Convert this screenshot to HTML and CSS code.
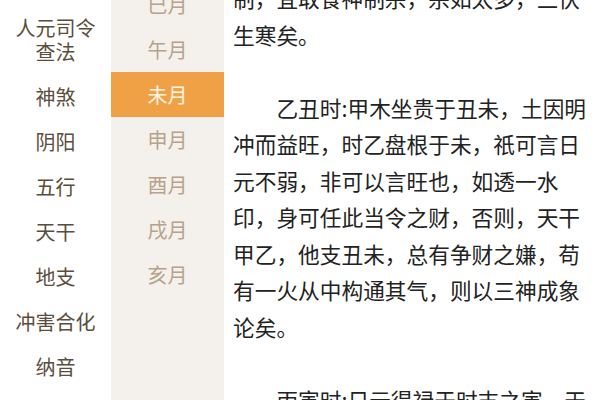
FILE: index.html
```html
<!DOCTYPE html>
<html lang="zh">
<head>
<meta charset="utf-8">
<link rel="stylesheet" href="styles.css">
</head>
<body>
<div class="page">
  <nav class="cats">
    <div class="cat">人元司令<br>查法</div>
    <div class="cat">神煞</div>
    <div class="cat">阴阳</div>
    <div class="cat">五行</div>
    <div class="cat">天干</div>
    <div class="cat">地支</div>
    <div class="cat">冲害合化</div>
    <div class="cat">纳音</div>
  </nav>
  <nav class="months">
    <div class="month">巳月</div>
    <div class="month">午月</div>
    <div class="month active">未月</div>
    <div class="month">申月</div>
    <div class="month">酉月</div>
    <div class="month">戌月</div>
    <div class="month">亥月</div>
  </nav>
  <article class="content">
    <p class="cont">制，宜取食神制杀，杀如太多，三伏生寒矣。</p>
    <p>乙丑时:甲木坐贵于丑未，土因明冲而益旺，时乙盘根于未，祇可言日元不弱，非可以言旺也，如透一水印，身可任此当令之财，否则，天干甲乙，他支丑未，总有争财之嫌，苟有一火从中构通其气，则以三神成象论矣。</p>
    <p>丙寅时:日元得禄于时支之寅，天干透出，身旺任财。</p>
  </article>
</div>
</body>
</html>
```
FILE: styles.css
```css
html, body {
  margin: 0;
  padding: 0;
  background: #ffffff;
}
body {
  width: 600px;
  height: 400px;
  overflow: hidden;
  font-family: "Noto Sans CJK SC", "Noto Sans", sans-serif;
}
.page {
  display: flex;
  height: 400px;
  overflow: hidden;
}
.cats {
  width: 111px;
  flex: none;
  padding-top: 5px;
  color: #5b4d3b;
  font-size: 20px;
}
.cat {
  text-align: center;
  line-height: 24px;
  padding: 10.5px 0;
}
.months {
  width: 113px;
  flex: none;
  background: #f4f1ec;
  color: #b7a28b;
  font-size: 20px;
}
.month {
  height: 45px;
  line-height: 45px;
  text-align: center;
}
.month:first-child {
  margin-top: -18.5px;
}
.month.active {
  background: #f0a145;
  color: #fff6e6;
}
.content {
  flex: 1;
  padding-left: 9px;
  padding-right: 4px;
  color: #222222;
  font-size: 21.7px;
  line-height: 36.5px;
  margin-top: -20px;
}
.content p {
  margin: 0 0 36.5px 0;
  text-indent: 2em;
}
.content p.cont {
  text-indent: 0;
}
```
